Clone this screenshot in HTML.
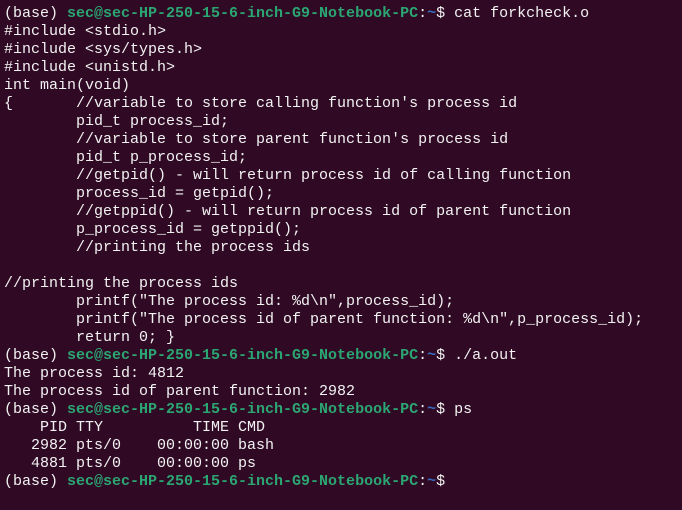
<!DOCTYPE html>
<html><head><meta charset="utf-8"><style>
html,body{margin:0;padding:0;background:#300a24;width:682px;height:510px;overflow:hidden}
pre{margin:0;padding:5px 0 0 4px;font-family:"Liberation Mono",monospace;font-size:15px;line-height:18px;color:#f2f2f2;white-space:pre}
.g{color:#2ba673;font-weight:bold}.b{color:#3a6cc0;font-weight:bold}
</style></head><body><pre>(base) <span class="g">sec@sec-HP-250-15-6-inch-G9-Notebook-PC</span>:<span class="b">~</span>$ cat forkcheck.o
#include &lt;stdio.h&gt;
#include &lt;sys/types.h&gt;
#include &lt;unistd.h&gt;
int main(void)
{       //variable to store calling function's process id
        pid_t process_id;
        //variable to store parent function's process id
        pid_t p_process_id;
        //getpid() - will return process id of calling function
        process_id = getpid();
        //getppid() - will return process id of parent function
        p_process_id = getppid();
        //printing the process ids

//printing the process ids
        printf("The process id: %d\n",process_id);
        printf("The process id of parent function: %d\n",p_process_id);
        return 0; }
(base) <span class="g">sec@sec-HP-250-15-6-inch-G9-Notebook-PC</span>:<span class="b">~</span>$ ./a.out
The process id: 4812
The process id of parent function: 2982
(base) <span class="g">sec@sec-HP-250-15-6-inch-G9-Notebook-PC</span>:<span class="b">~</span>$ ps
    PID TTY          TIME CMD
   2982 pts/0    00:00:00 bash
   4881 pts/0    00:00:00 ps
(base) <span class="g">sec@sec-HP-250-15-6-inch-G9-Notebook-PC</span>:<span class="b">~</span>$ </pre></body></html>
